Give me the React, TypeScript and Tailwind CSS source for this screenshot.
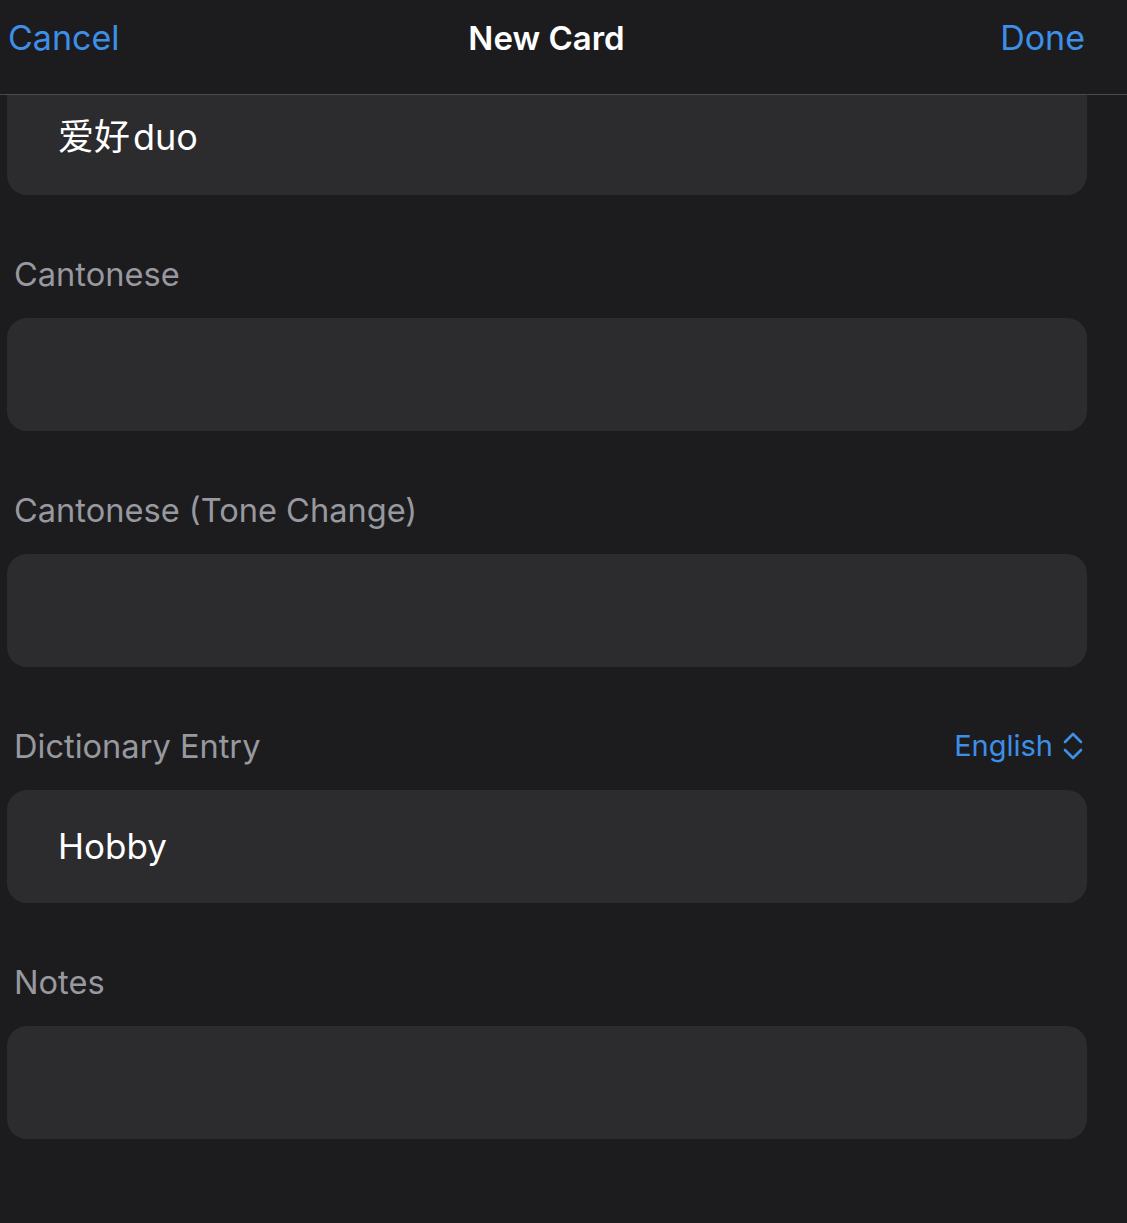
import React from "react";

const font = { fontFamily: "Inter, 'Noto Sans CJK SC', sans-serif" };

function Field({ value }: { value?: string }) {
  return (
    <div className="mx-[7px] h-[113px] rounded-[20px] bg-[#2c2c2e] flex items-center pl-[51px] text-[35px] text-white">
      {value}
    </div>
  );
}

function Label({ text, right }: { text: string; right?: React.ReactNode }) {
  return (
    <div className="h-[123px] pl-[14px] pr-[11px] pt-[59px]">
      <div className="h-[40px] flex items-center justify-between">
        <span className="text-[32.6px] leading-[40px] text-[#98989f]">{text}</span>
        {right}
      </div>
    </div>
  );
}

export default function App() {
  return (
    <div className="w-[1127px] h-[1223px] bg-[#1c1c1e] overflow-hidden" style={font}>
      {/* Nav bar */}
      <div className="h-[95px] border-b border-[#4a4a4d]">
        <div className="w-[1094px] grid grid-cols-3 items-center pt-[17px] pl-[8px] pr-[9px]">
          <span className="text-[34px] leading-[42px] text-[#3d8fe8]">Cancel</span>
          <span className="text-[33px] leading-[42px] font-semibold text-white text-center">New Card</span>
          <span className="text-[34px] leading-[42px] text-[#3d8fe8] text-right">Done</span>
        </div>
      </div>

      <div className="w-[1094px]">
        {/* first field, scrolled under the bar */}
        <div className="mx-[7px] h-[100px] rounded-b-[20px] bg-[#2c2c2e] flex items-start pt-[20px] pl-[51px] text-[36px] leading-[44px] text-white">
          <span>爱好</span>
          <span className="ml-[3px]">duo</span>
        </div>

        <Label text="Cantonese" />
        <Field />

        <Label text="Cantonese (Tone Change)" />
        <Field />

        <Label
          text="Dictionary Entry"
          right={
            <span className="flex items-center gap-[10px] text-[29px] leading-[40px] text-[#3d8fe8]">
              English
              <svg width="20" height="28" viewBox="0 0 20 28" fill="none" stroke="#3d8fe8" strokeWidth="2.6" strokeLinecap="round" strokeLinejoin="round">
                <path d="M2 10 L10 2 L18 10" />
                <path d="M2 18 L10 26 L18 18" />
              </svg>
            </span>
          }
        />
        <Field value="Hobby" />

        <Label text="Notes" />
        <Field />
      </div>
    </div>
  );
}
